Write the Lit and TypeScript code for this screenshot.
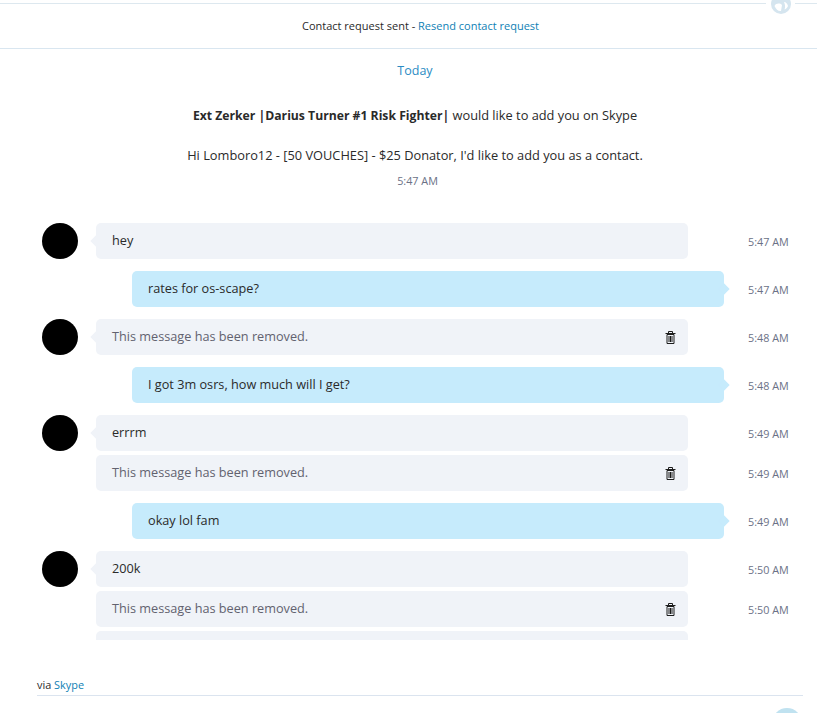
import { LitElement, html, css, svg } from "lit";
import { customElement } from "lit/decorators.js";

type Msg = { dir: "in" | "out"; text: string; time: string; removed?: boolean; first?: boolean; gap: number };

const MSGS: Msg[] = [
  { dir: "in", text: "hey", time: "5:47 AM", first: true, gap: 0 },
  { dir: "out", text: "rates for os-scape?", time: "5:47 AM", first: true, gap: 12 },
  { dir: "in", text: "This message has been removed.", time: "5:48 AM", removed: true, first: true, gap: 12 },
  { dir: "out", text: "I got 3m osrs, how much will I get?", time: "5:48 AM", first: true, gap: 12 },
  { dir: "in", text: "errrm", time: "5:49 AM", first: true, gap: 12 },
  { dir: "in", text: "This message has been removed.", time: "5:49 AM", removed: true, gap: 4 },
  { dir: "out", text: "okay lol fam", time: "5:49 AM", first: true, gap: 12 },
  { dir: "in", text: "200k", time: "5:50 AM", first: true, gap: 12 },
  { dir: "in", text: "This message has been removed.", time: "5:50 AM", removed: true, gap: 4 },
  { dir: "in", text: "", time: "", gap: 4 },
];

const trash = svg`<svg class="trash" width="11" height="13" viewBox="0 0 11 13" aria-hidden="true">
  <path d="M0.5 2.5H10.5M3.5 2.5V0.5H7.5V2.5" fill="none" stroke="#1c1c1c" stroke-width="1"/>
  <path d="M2 3.5H9V12.5H2Z" fill="none" stroke="#1c1c1c" stroke-width="1"/>
  <path d="M4 5V11M5.5 5V11M7 5V11" fill="none" stroke="#1c1c1c" stroke-width="1"/>
</svg>`;

@customElement("app-root")
export class AppRoot extends LitElement {
  static styles = css`
    :host {
      display: block;
      width: 817px;
      height: 713px;
      overflow: hidden;
      position: relative;
      background: #fff;
      font-family: "Open Sans", "Noto Sans", sans-serif;
      color: #2a2a2a;
    }
    .top {
      height: 49px;
      box-sizing: border-box;
      border-bottom: 1px solid #d9e6f0;
      position: relative;
    }
    .top-rule {
      display: flex;
      gap: 5px;
      padding-top: 3px;
    }
    .rule {
      height: 1px;
      background: #dde8ef;
    }
    .rule.a { width: 766px; }
    .rule.b { flex: 1; margin-left: 24px; }
    .me {
      position: absolute;
      left: 771px;
      top: -6px;
    }
    .notice {
      text-align: center;
      font-size: 11px;
      line-height: 16px;
      padding-top: 14px;
      padding-left: 24px;
    }
    a { color: #0f7fb5; text-decoration: none; }
    .scroll {
      height: 591px;
      overflow: hidden;
    }
    .today {
      text-align: center;
      color: #2b8cc4;
      font-size: 12.5px;
      line-height: 18px;
      padding-top: 13px;
      padding-left: 13px;
    }
    .req {
      text-align: center;
      font-size: 12.8px;
      line-height: 18px;
      height: 18px;
      margin-top: 26px;
      padding-left: 13px;
    }
    .req b { font-weight: 700; font-size: 12.2px; }
    .hi {
      text-align: center;
      font-size: 12.8px;
      line-height: 18px;
      margin-top: 22px;
      padding-left: 13px;
    }
    .stamp {
      text-align: center;
      font-size: 10.8px;
      line-height: 16px;
      color: #6b7186;
      margin-top: 9px;
      padding-left: 18px;
    }
    .list {
      margin-top: 34px;
      display: flex;
      flex-direction: column;
    }
    .row {
      display: flex;
      align-items: center;
      height: 36px;
      flex: none;
      position: relative;
    }
    .slot {
      width: 36px;
      height: 36px;
      margin-left: 42px;
      margin-right: 18px;
      border-radius: 50%;
      flex: none;
    }
    .slot.avatar { background: #000; }
    .bubble {
      width: 592px;
      height: 36px;
      box-sizing: border-box;
      padding: 0 11px 2px 16px;
      flex: none;
      border-radius: 5px;
      display: flex;
      align-items: center;
      justify-content: space-between;
      font-size: 12.7px;
      position: relative;
      color: #2a2a2a;
      background: #f0f3f8;
    }
    .row.out .bubble {
      margin-left: 132px;
      background: #c6ebfc;
    }
    .bubble.removed { color: #62626f; }
    .bubble.notch::before {
      content: "";
      position: absolute;
      width: 8px;
      height: 8px;
      top: 14px;
      left: -4px;
      background: inherit;
      transform: rotate(45deg);
    }
    .row.out .bubble.notch::before {
      left: auto;
      right: -4px;
    }
    .trash { margin: 2px 1px 0 0; }
    .time {
      font-size: 10.8px;
      color: #6b7186;
      white-space: nowrap;
      margin-left: 60px;
    }
    .row.out .time { margin-left: 24px; }
    .via {
      margin: 38px 14px 0 37px;
      height: 17px;
      border-bottom: 1px solid #dbe4ef;
      font-size: 10.9px;
      line-height: 14px;
    }
    .bottom-dot {
      position: absolute;
      left: 772px;
      top: 708px;
      width: 30px;
      height: 30px;
      border-radius: 50%;
      background: #c0e2f0;
    }
  `;

  private row(m: Msg) {
    const slot =
      m.dir === "in"
        ? html`<div class="slot ${m.first ? "avatar" : ""}"></div>`
        : "";
    return html`<div class="row ${m.dir}" style="margin-top:${m.gap}px">
      ${slot}
      <div class="bubble ${m.first ? "notch" : ""} ${m.removed ? "removed" : ""}">
        <span>${m.text}</span>${m.removed ? trash : ""}
      </div>
      <span class="time">${m.time}</span>
    </div>`;
  }

  render() {
    return html`
      <div class="top">
        <div class="top-rule"><div class="rule a"></div><div class="rule b"></div></div>
        <svg class="me" width="20" height="20" viewBox="0 0 20 20" aria-hidden="true">
          <circle cx="10" cy="10" r="10" fill="#d5e5ef"/>
          <path d="M3.5 12C5 9 9 9 11 11L10 17C7.5 17.5 5 15.5 3.5 12ZM13 8C15 8 16.5 10 17 12C16.3 14 15 15 13.5 15.5C14.5 13 14 10 13 8Z" fill="#fff"/>
        </svg>
        <div class="notice">Contact request sent - <a>Resend contact request</a></div>
      </div>
      <div class="scroll">
        <div class="today">Today</div>
        <div class="req"><b>Ext Zerker |Darius Turner #1 Risk Fighter|</b> would like to add you on Skype</div>
        <div class="hi">Hi Lomboro12 - [50 VOUCHES] - $25 Donator, I'd like to add you as a contact.</div>
        <div class="stamp">5:47 AM</div>
        <div class="list">${MSGS.map((m) => this.row(m))}</div>
      </div>
      <div class="via">via <a>Skype</a></div>
      <div class="bottom-dot"></div>
    `;
  }
}
